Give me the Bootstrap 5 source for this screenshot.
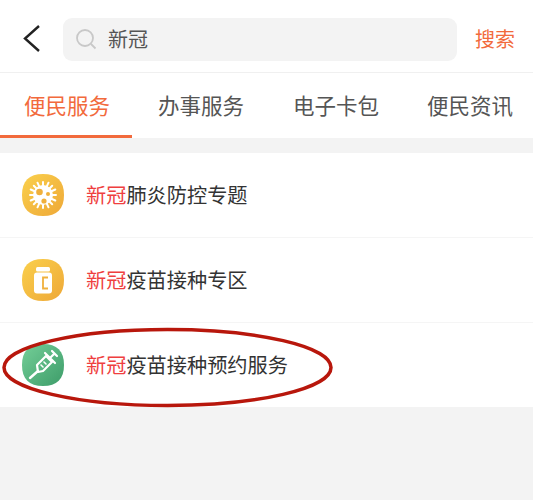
<!DOCTYPE html>
<html lang="zh"><head><meta charset="utf-8"><title>搜索</title>
<link href="https://cdn.jsdelivr.net/npm/bootstrap@5.3.0/dist/css/bootstrap.min.css" rel="stylesheet">
<style>
html,body{height:100%}
body{background:#f3f3f3;font-family:"Noto Sans CJK SC","Liberation Sans",sans-serif;overflow:hidden}
.topbar{height:73px;background:#fff;border-bottom:1px solid #f0f0f0;padding:6px 18px 0 22px}
.backbtn{width:41px;flex:none}
.searchbox{height:43px;width:394px;flex:none;background:#f3f3f3;border-radius:9px;padding-left:12px;font-size:20px;color:#555;gap:11px}
.searchgo{font-size:20px;color:#f26a3c;margin-left:auto;line-height:1}
.tabbar{height:65px;background:#fff}
.tabitem{font-size:21.5px;line-height:1;color:#555;height:65px;padding-top:21px;white-space:nowrap}
.tabitem.on{color:#f26a3c;width:132px;padding-left:24px;border-bottom:3px solid #f26a3c}
.tab2{margin-left:26px}.tab3{margin-left:49px}.tab4{margin-left:48px}
.svclist{margin-top:15px;background:#fff}
.svcrow{height:85px;padding-left:22px;border-bottom:1px solid #f5f5f5;font-size:20.2px;color:#333;position:relative}
.svcrow:last-child{border-bottom:0;height:84px}
.svcicon{width:42px;height:42px;flex:none;margin-right:22px}
.hit{color:#ef3f3f}
.ringmark{position:absolute;left:2px;top:4px;width:331px;height:81px;pointer-events:none}
</style></head><body>
<div class="topbar d-flex align-items-center">
  <div class="backbtn d-flex"><svg width="20" height="30" viewBox="0 0 20 30"><path d="M17 2 3 14.500 17 27" fill="none" stroke="#222" stroke-width="2.400"/></svg></div>
  <div class="searchbox d-flex align-items-center"><svg width="22" height="22" viewBox="0 0 22 22"><circle cx="10" cy="10" r="8" fill="none" stroke="#c8c8c8" stroke-width="1.800"/><path d="m16 16 4.500 4.500" stroke="#c8c8c8" stroke-width="1.800"/></svg><span>新冠</span></div>
  <div class="searchgo">搜索</div>
</div>
<div class="tabbar d-flex">
  <div class="tabitem on">便民服务</div><div class="tabitem tab2">办事服务</div><div class="tabitem tab3">电子卡包</div><div class="tabitem tab4">便民资讯</div>
</div>
<div class="svclist">
  <div class="svcrow d-flex align-items-center">
    <svg class="svcicon" viewBox="0 0 42 42"><defs><linearGradient id="y" x1="0" y1="0" x2="1" y2="1"><stop offset="0" stop-color="#fad04c"/><stop offset="1" stop-color="#eea838"/></linearGradient><linearGradient id="g" x1="0" y1="0" x2="1" y2="1"><stop offset="0" stop-color="#74cf98"/><stop offset="1" stop-color="#3d9c69"/></linearGradient></defs>
      <path d="M21 0C35 0 42 7 42 21S35 42 21 42 0 35 0 21 7 0 21 0Z" fill="url(#y)"/>
      <g stroke="#fff" stroke-width="2" stroke-linecap="round"><path d="M21 8v26M8 21h26M11.800 11.800l18.400 18.400M30.200 11.800 11.800 30.200M15.500 8.700l11 24.600M26.500 8.700l-11 24.600M8.700 15.500l24.600 11M33.300 15.500l-24.600 11"/></g>
      <circle cx="21" cy="21" r="10" fill="#fff"/><circle cx="17.500" cy="18" r="3.300" fill="#f0b03c"/><circle cx="26" cy="20" r="2" fill="#f0b03c"/><circle cx="22" cy="27" r="2.600" fill="#f0b03c"/>
    </svg>
    <div><span class="hit">新冠</span>肺炎防控专题</div>
  </div>
  <div class="svcrow d-flex align-items-center">
    <svg class="svcicon" viewBox="0 0 42 42"><path d="M21 0C35 0 42 7 42 21S35 42 21 42 0 35 0 21 7 0 21 0Z" fill="url(#y)"/>
      <rect x="14" y="8" width="14" height="4.500" rx="1.500" fill="#fff"/><rect x="12" y="13.500" width="18" height="21" rx="3" fill="#fff"/><path d="M26 18.500h-5v11h5" fill="none" stroke="#f0b03c" stroke-width="1.800"/>
    </svg>
    <div><span class="hit">新冠</span>疫苗接种专区</div>
  </div>
  <div class="svcrow d-flex align-items-center">
    <svg class="svcicon" viewBox="0 0 42 42"><path d="M21 0C35 0 42 7 42 21S35 42 21 42 0 35 0 21 7 0 21 0Z" fill="url(#g)"/>
      <g fill="none" stroke="#fff" stroke-linecap="round"><path d="m15 21 9-9 6 6-9 9-5 1Z" stroke-width="2.200" stroke-linejoin="round"/><path d="m16 27-8 7" stroke-width="2.400"/><path d="m23 9 10 10M28 14l4-4M30 7l5 5" stroke-width="2.200"/><path d="m19 21 2 2M22 18l2 2" stroke-width="1.600"/></g>
    </svg>
    <div><span class="hit">新冠</span>疫苗接种预约服务</div>
    <svg class="ringmark" viewBox="0 0 331 81"><ellipse cx="165.500" cy="40.500" rx="163.500" ry="38" fill="none" stroke="#b8170c" stroke-width="3.500"/></svg>
  </div>
</div>
</body></html>
